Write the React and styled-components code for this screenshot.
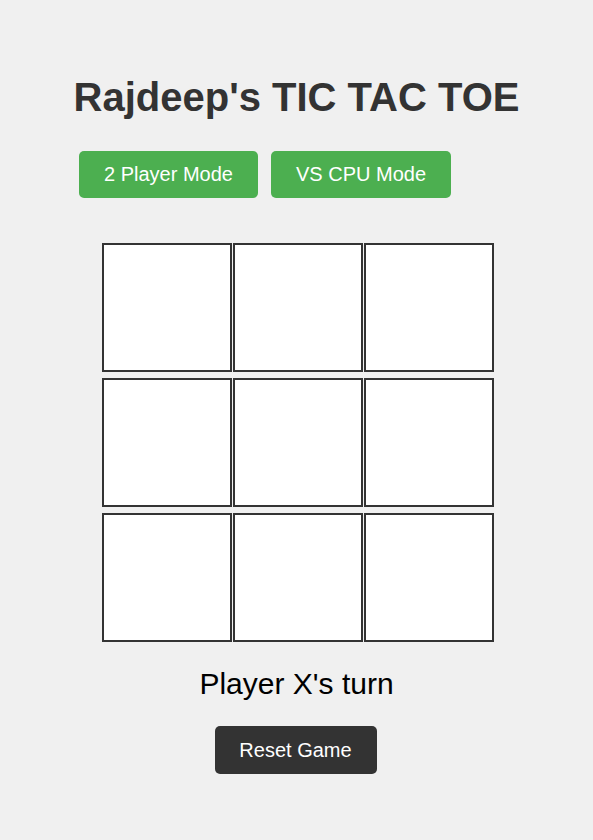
import React, { useState } from "react";
import styled, { createGlobalStyle } from "styled-components";

const GlobalStyle = createGlobalStyle`
  html, body {
    margin: 0;
    padding: 0;
    background: #f0f0f0;
    font-family: "Liberation Sans", Arial, sans-serif;
  }
`;

const Page = styled.div`
  display: flex;
  flex-direction: column;
  align-items: center;
  width: 593px;
  min-height: 840px;
  padding-top: 74px;
  box-sizing: border-box;
`;

const Title = styled.h1`
  margin: 0;
  font-size: 40px;
  font-weight: bold;
  line-height: 46px;
  color: #333;
`;

const ModeBar = styled.div`
  display: flex;
  gap: 13px;
  align-self: flex-start;
  margin: 31px 0 0 79px;
`;

const ModeButton = styled.button`
  width: ${(p) => p.$w}px;
  height: 47px;
  border: none;
  border-radius: 5px;
  background: #4caf50;
  color: #fff;
  font-family: inherit;
  font-size: 20px;
  cursor: pointer;
  padding: 0;
`;

const Board = styled.div`
  display: grid;
  grid-template-columns: repeat(3, 130px);
  grid-auto-rows: 129px;
  column-gap: 1px;
  row-gap: 6px;
  margin: 45px 0 0 3px;
`;

const Cell = styled.button`
  box-sizing: border-box;
  border: 2px solid #333;
  background: #fff;
  font-family: inherit;
  font-size: 64px;
  font-weight: bold;
  color: #333;
  padding: 0;
  cursor: pointer;
`;

const Status = styled.div`
  margin-top: 24px;
  font-size: 30px;
  line-height: 35px;
  color: #000;
`;

const ResetButton = styled.button`
  margin: 25px 0 0 -2px;
  width: 162px;
  height: 48px;
  border: none;
  border-radius: 5px;
  background: #333;
  color: #fff;
  font-family: inherit;
  font-size: 20px;
  cursor: pointer;
  padding: 0;
`;

export default function App() {
  const [cells, setCells] = useState(Array(9).fill(""));
  const [turn, setTurn] = useState("X");

  const play = (i) => {
    if (cells[i]) return;
    const next = cells.slice();
    next[i] = turn;
    setCells(next);
    setTurn(turn === "X" ? "O" : "X");
  };

  const reset = () => {
    setCells(Array(9).fill(""));
    setTurn("X");
  };

  return (
    <>
      <GlobalStyle />
      <Page>
        <Title>Rajdeep's TIC TAC TOE</Title>
        <ModeBar>
          <ModeButton $w={179}>2 Player Mode</ModeButton>
          <ModeButton $w={180}>VS CPU Mode</ModeButton>
        </ModeBar>
        <Board>
          {cells.map((c, i) => (
            <Cell key={i} onClick={() => play(i)}>
              {c}
            </Cell>
          ))}
        </Board>
        <Status>Player {turn}'s turn</Status>
        <ResetButton onClick={reset}>Reset Game</ResetButton>
      </Page>
    </>
  );
}
